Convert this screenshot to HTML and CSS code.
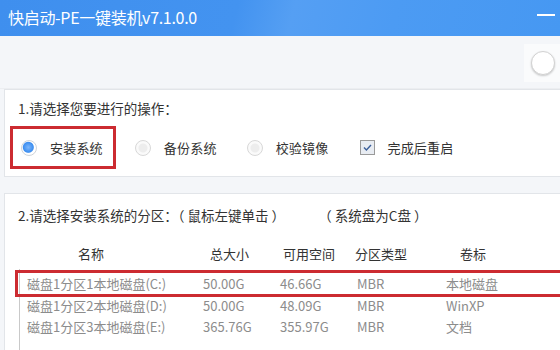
FILE: index.html
```html
<!DOCTYPE html>
<html lang="zh-CN">
<head>
    <meta charset="UTF-8">
    <title>快启动-PE一键装机</title>
    <link rel="stylesheet" href="styles.css">
</head>
<body>
    <main class="app">
        <header class="titlebar">
            <h1>快启动-PE一键装机v7.1.0.0</h1>
            <span class="minimize"></span>
        </header>

        <div class="toolbar">
            <span class="toggle"><span class="knob"></span></span>
        </div>

        <section class="panel ops-panel">
            <p class="panel-title">1.请选择您要进行的操作：</p>
            <div class="ops">
                <label class="opt is-marked">
                    <span class="radio is-on"></span>安装系统
                </label>
                <label class="opt opt-backup">
                    <span class="radio"></span>备份系统
                </label>
                <label class="opt opt-check">
                    <span class="radio"></span>校验镜像
                </label>
                <label class="opt opt-reboot">
                    <span class="checkbox">
                        <svg viewBox="0 0 15 15" width="15" height="15">
                            <path d="M4 7.6 L6.4 10 L11 5" fill="none" stroke="#3b5f9a" stroke-width="1.4" />
                        </svg>
                    </span>完成后重启
                </label>
            </div>
        </section>

        <section class="panel part-panel">
            <p class="panel-title">2.请选择安装系统的分区：（ 鼠标左键单击 ）<span class="hint">（ 系统盘为C盘 ）</span></p>

            <div class="grid head">
                <span>名称</span>
                <span>总大小</span>
                <span>可用空间</span>
                <span>分区类型</span>
                <span>卷标</span>
            </div>

            <div class="list">
                <div class="grid row is-marked">
                    <span>磁盘1分区1本地磁盘(C:)</span>
                    <span>50.00G</span>
                    <span>46.66G</span>
                    <span>MBR</span>
                    <span>本地磁盘</span>
                </div>
                <div class="grid row">
                    <span>磁盘1分区2本地磁盘(D:)</span>
                    <span>50.00G</span>
                    <span>48.09G</span>
                    <span>MBR</span>
                    <span>WinXP</span>
                </div>
                <div class="grid row">
                    <span>磁盘1分区3本地磁盘(E:)</span>
                    <span>365.76G</span>
                    <span>355.97G</span>
                    <span>MBR</span>
                    <span>文档</span>
                </div>
            </div>
        </section>
    </main>
</body>
</html>
```

FILE: styles.css
```css
*,
*::before,
*::after {
    box-sizing: border-box;
    margin: 0;
    padding: 0;
}

body {
    font-family: "Noto Sans CJK SC", "Noto Sans", sans-serif;
    font-size: 13px;
    color: #333;
    background: #f4f6f9;
    width: 560px;
    height: 350px;
    overflow: hidden;
}

.app {
    width: 560px;
    height: 350px;
    overflow: hidden;
}

.titlebar {
    height: 36px;
    display: flex;
    align-items: center;
    justify-content: space-between;
    padding: 0 5px 2px 8px;
    background: linear-gradient(105deg, #3f8fee 0, #4393f0 42%, #559ff3 52%, #4c9bf3 70%, #4698f2 100%);

    & h1 {
        font-size: 16px;
        font-weight: 400;
        color: #fff;
        letter-spacing: -0.3px;
    }

    & .minimize {
        width: 18px;
        height: 2px;
        background: #fff;
        margin-bottom: 4px;
    }
}

.toolbar {
    height: 53px;
    display: flex;
    justify-content: flex-end;
    align-items: center;
    padding-top: 1px;
    border-bottom: 1px solid #eceef1;
}

.toggle {
    width: 36px;
    height: 38px;
    display: flex;
    align-items: center;
    padding-left: 7px;
    background: #fafbfc;

    & .knob {
        width: 24px;
        height: 24px;
        border-radius: 50%;
        background: #fff;
        border: 1px solid #d2d2d2;
        box-shadow: 0 1px 2px rgba(0, 0, 0, 0.2);
    }
}

.panel {
    margin-left: 4px;
    width: 570px;
    background: #fff;
    border: 1px solid #e2e5e9;
}

.panel-title {
    padding-left: 13px;
    line-height: 20px;
    font-size: 13.5px;
}

.ops-panel {
    height: 88px;
    padding-top: 8px;
}

.ops {
    display: flex;
    align-items: center;
    margin-top: 8px;
}

.opt {
    display: flex;
    align-items: center;
    gap: 13px;
    line-height: 20px;
    font-size: 13px;
    letter-spacing: 0.2px;

    &.is-marked {
        height: 43px;
        margin-left: 5px;
        padding: 0 10px 0 8px;
        border: 3px solid #cc2b31;
    }

    &.opt-backup {
        margin-left: 19px;
    }

    &.opt-check {
        margin-left: 30px;
    }

    &.opt-reboot {
        margin-left: 32px;
        gap: 12px;
    }
}

.radio {
    width: 16px;
    height: 16px;
    border-radius: 50%;
    border: 1px solid #d8d8d8;
    background: radial-gradient(circle, #ededed 0 4px, #fafafa 5px);

    &.is-on {
        border-color: #cfd4da;
        background: radial-gradient(circle at 45% 45%, #7db7fb 0, #3d8ef0 5px, #fff 6px);
    }
}

.checkbox {
    width: 15px;
    height: 15px;
    border: 1px solid #9a9a9a;
    background: #e8ecf2;
    display: flex;

    & svg {
        margin: -1px;
    }
}

.part-panel {
    margin-top: 16px;
    height: 180px;
    padding-top: 11px;

    & .hint {
        margin-left: 40px;
    }
}

.grid {
    display: grid;
    grid-template-columns: 176px 77px 77px 89px 1fr;
    margin-left: 14px;
}

.head {
    margin-top: 19px;
    line-height: 20px;

    & span:nth-child(1) { padding-left: 59px; }
    & span:nth-child(2) { padding-left: 15px; }
    & span:nth-child(3) { padding-left: 11px; }
    & span:nth-child(4) { padding-left: 6px; }
    & span:nth-child(5) { padding-left: 22px; }
}

.list {
    margin-top: 5px;
    margin-left: 14px;
    border-left: 1px solid #c9c9c9;
    height: 100px;
    padding-top: 4px;

    & .grid {
        margin-left: 0;
    }
}

.row {
    position: relative;
    height: 21.5px;
    line-height: 21.5px;
    color: #8c8c8c;
    font-size: 13px;

    & span {
        padding-left: 7px;
        white-space: nowrap;
    }

    &.is-marked::after {
        content: "";
        position: absolute;
        inset: -3px -20px -2px -5px;
        border: 3px solid #cc2b31;
    }
}
```
